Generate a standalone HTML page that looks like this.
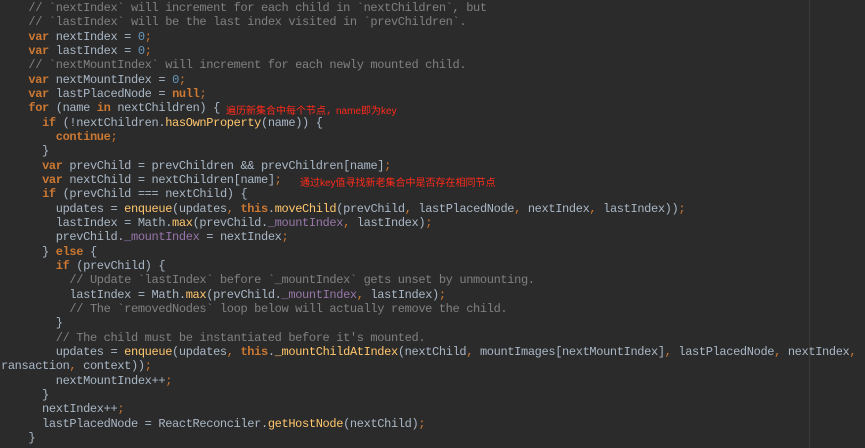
<!DOCTYPE html>
<html><head><meta charset="utf-8"><style>
html,body{margin:0;padding:0;background:#2b2b2b;width:865px;height:448px;overflow:hidden;position:relative}
pre{position:absolute;left:1px;top:1px;margin:0;font-family:"Liberation Mono",monospace;font-size:12px;letter-spacing:-0.36px;line-height:14.33px;color:#a9b7c6}
.k{color:#cc7832;font-weight:bold}.p{color:#cc7832}.c{color:#808080}.n{color:#6897bb}.f{color:#ffc66d}.v{color:#9876aa}
.r{color:#ff2a1a;font-family:"Liberation Sans","Noto Sans CJK SC",sans-serif;font-size:10px;position:absolute}
.m{position:absolute;left:809px;top:0;width:1px;height:448px;background:#3a3a3a}
</style></head><body>
<div class="m"></div>
<pre>    <span class="c">// `nextIndex` will increment for each child in `nextChildren`, but</span>
    <span class="c">// `lastIndex` will be the last index visited in `prevChildren`.</span>
    <span class="k">var</span> nextIndex = <span class="n">0</span><span class="p">;</span>
    <span class="k">var</span> lastIndex = <span class="n">0</span><span class="p">;</span>
    <span class="c">// `nextMountIndex` will increment for each newly mounted child.</span>
    <span class="k">var</span> nextMountIndex = <span class="n">0</span><span class="p">;</span>
    <span class="k">var</span> lastPlacedNode = <span class="k">null</span><span class="p">;</span>
    <span class="k">for</span> (name <span class="k">in</span> nextChildren) {
      <span class="k">if</span> (!nextChildren.<span class="f">hasOwnProperty</span>(name)) {
        <span class="k">continue</span><span class="p">;</span>
      }
      <span class="k">var</span> prevChild = prevChildren &amp;&amp; prevChildren[name]<span class="p">;</span>
      <span class="k">var</span> nextChild = nextChildren[name]<span class="p">;</span>
      <span class="k">if</span> (prevChild === nextChild) {
        updates = <span class="f">enqueue</span>(updates<span class="p">,</span> <span class="k">this</span>.<span class="f">moveChild</span>(prevChild<span class="p">,</span> lastPlacedNode<span class="p">,</span> nextIndex<span class="p">,</span> lastIndex))<span class="p">;</span>
        lastIndex = Math.<span class="f">max</span>(prevChild.<span class="v">_mountIndex</span><span class="p">,</span> lastIndex)<span class="p">;</span>
        prevChild.<span class="v">_mountIndex</span> = nextIndex<span class="p">;</span>
      } <span class="k">else</span> {
        <span class="k">if</span> (prevChild) {
          <span class="c">// Update `lastIndex` before `_mountIndex` gets unset by unmounting.</span>
          lastIndex = Math.<span class="f">max</span>(prevChild.<span class="v">_mountIndex</span><span class="p">,</span> lastIndex)<span class="p">;</span>
          <span class="c">// The `removedNodes` loop below will actually remove the child.</span>
        }
        <span class="c">// The child must be instantiated before it's mounted.</span>
        updates = <span class="f">enqueue</span>(updates<span class="p">,</span> <span class="k">this</span>.<span class="f">_mountChildAtIndex</span>(nextChild<span class="p">,</span> mountImages[nextMountIndex]<span class="p">,</span> lastPlacedNode<span class="p">,</span> nextIndex<span class="p">,</span>
ransaction<span class="p">,</span> context))<span class="p">;</span>
        nextMountIndex++<span class="p">;</span>
      }
      nextIndex++<span class="p">;</span>
      lastPlacedNode = ReactReconciler.<span class="f">getHostNode</span>(nextChild)<span class="p">;</span>
    }</pre>
<div class="r" style="left:226px;top:102px">遍历新集合中每个节点，name即为key</div>
<div class="r" style="left:300px;top:174px">通过key值寻找新老集合中是否存在相同节点</div>
</body></html>
